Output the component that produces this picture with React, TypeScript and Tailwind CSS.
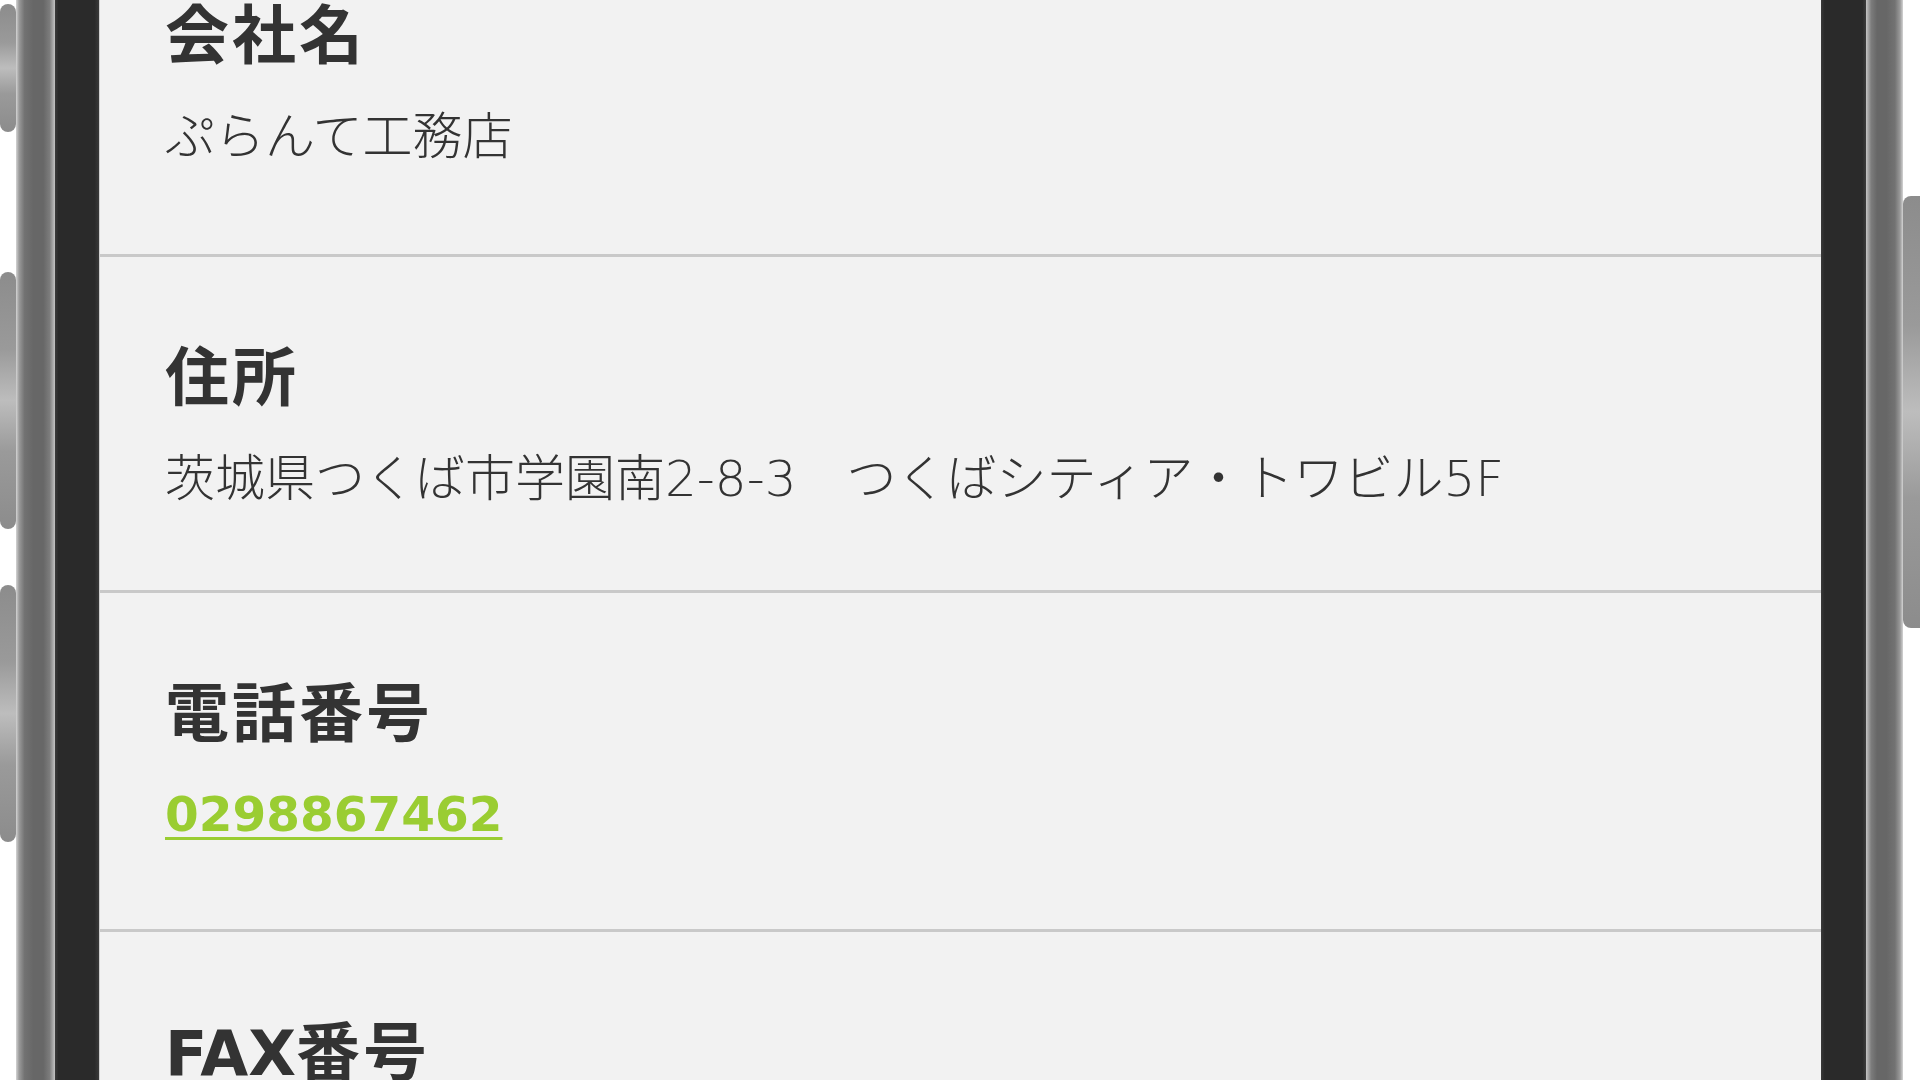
import React from "react";

const cjk = '"Noto Sans CJK JP", "Noto Sans", sans-serif';
const lat = { fontFamily: '"DejaVu Sans", "Noto Sans CJK JP", sans-serif' };

type Row = { label: React.ReactNode; value: React.ReactNode; key: string };

const rows: Row[] = [
  { key: "company", label: "会社名", value: "ぷらんて工務店" },
  {
    key: "address",
    label: "住所",
    value: (
      <>
        茨城県つくば市学園南<span className="font-light leading-none" style={lat}>2-8-3</span>　つくばシティア・トワビル<span className="font-light leading-none" style={lat}>5F</span>
      </>
    ),
  },
  {
    key: "tel",
    label: "電話番号",
    value: (
      <a
        href="#"
        className="text-[48.5px] font-bold text-[#9acd32] underline decoration-[3px] underline-offset-[6px]"
        style={{ fontFamily: '"DejaVu Sans", sans-serif' }}
      >
        0298867462
      </a>
    ),
  },
  {
    key: "fax",
    label: (
      <>
        <span className="text-[62px] leading-none tracking-normal" style={lat}>FAX</span>番号
      </>
    ),
    value: "0298867463",
  },
];

export default function App() {
  return (
    <div className="flex h-[1080px] w-[1920px] overflow-hidden bg-white" style={{ fontFamily: cjk }}>
      {/* left buttons */}
      <div className="flex w-[16px] shrink-0 flex-col">
        <div className="mt-[4px] h-[128px] w-[16px] rounded-[8px] bg-[linear-gradient(to_bottom,#8c8c8c_0%,#9a9a9a_30%,#bdbdbd_50%,#9a9a9a_70%,#8c8c8c_100%)]" />
        <div className="mt-[140px] h-[257px] w-[16px] rounded-[8px] bg-[linear-gradient(to_bottom,#8c8c8c_0%,#9a9a9a_30%,#bdbdbd_50%,#9a9a9a_70%,#8c8c8c_100%)]" />
        <div className="mt-[56px] h-[257px] w-[16px] rounded-[8px] bg-[linear-gradient(to_bottom,#8c8c8c_0%,#9a9a9a_30%,#bdbdbd_50%,#9a9a9a_70%,#8c8c8c_100%)]" />
      </div>
      {/* left frame */}
      <div className="w-[39px] shrink-0 bg-[linear-gradient(to_right,#d4d4d4_0%,#9a9a9a_8%,#727272_22%,#676767_45%,#676767_70%,#7c7c7c_86%,#c4c4c4_100%)]" />
      {/* left bezel */}
      <div className="w-[44px] shrink-0 bg-[linear-gradient(to_right,#3c3c3c_0%,#2a2a2a_8%,#2a2a2a_90%,#3a3a3a_100%)]" />
      {/* screen */}
      <div className="flex-1 border-l border-[#cfcfcf] bg-[#f2f2f2] text-[#333333]">
        <div className="-mt-[85px]">
          {rows.map((r, i) => (
            <section
              key={r.key}
              className={`border-b-[3px] border-[#c9c9c9] pl-[65px] pr-[65px] pt-[77px] ${i === 0 ? "pb-[84px]" : "pb-[78px]"}`}
            >
              <h2 className="text-[64px] font-bold leading-[1.2] tracking-[3px] text-[#333333]">{r.label}</h2>
              <p className="mt-[26px] text-[50px] font-light leading-[1.5] text-[#333333]">{r.value}</p>
            </section>
          ))}
        </div>
      </div>
      {/* right bezel */}
      <div className="w-[45px] shrink-0 bg-[linear-gradient(to_right,#3a3a3a_0%,#2a2a2a_8%,#2a2a2a_92%,#3c3c3c_100%)]" />
      {/* right frame */}
      <div className="w-[37px] shrink-0 bg-[linear-gradient(to_right,#c4c4c4_0%,#7c7c7c_14%,#676767_30%,#676767_55%,#727272_78%,#9a9a9a_92%,#d4d4d4_100%)]" />
      {/* right button */}
      <div className="flex w-[17px] shrink-0 flex-col overflow-hidden">
        <div className="mt-[196px] h-[432px] w-[26px] rounded-[8px] bg-[linear-gradient(to_bottom,#8c8c8c_0%,#9a9a9a_30%,#bdbdbd_50%,#9a9a9a_70%,#8c8c8c_100%)]" />
      </div>
    </div>
  );
}
